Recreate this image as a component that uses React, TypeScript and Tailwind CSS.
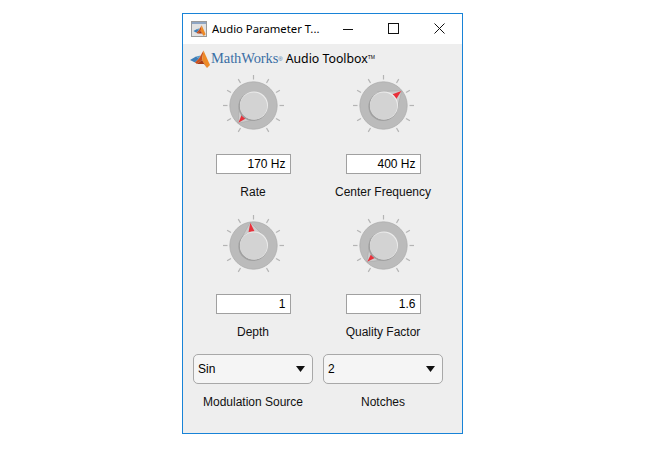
const ticks = [-150, -120, -90, -60, -30, 0, 30, 60, 90, 120, 150]

function Knob({ angle }: { angle: number }) {
  return (
    <svg width="71" height="71" viewBox="-35.5 -35.5 71 71" className="block">
      {ticks.map((t) => (
        <line key={t} x1="0" y1="-26" x2="0" y2="-30.5" stroke="#b4b4b4" strokeWidth="1.2" transform={`rotate(${t})`} />
      ))}
      <circle cx="0" cy="0" r="23.7" fill="#bbbbbb" stroke="#adadad" strokeWidth="0.8" />
      <g transform={`rotate(${angle})`}>
        <polygon points="0,-23.5 -14.3,-4.3 14.3,-4.3" fill="#cdcdcd" stroke="#a6a6a6" strokeWidth="0.5" />
        <polygon points="0,-23 -3,-14 3,-14" fill="#e8303a" />
      </g>
      <circle cx="-0.5" cy="1" r="14.6" fill="#a0a0a0" />
      <circle cx="0.5" cy="0" r="14" fill="#ececec" />
      <circle cx="0" cy="0.5" r="13.6" fill="#d3d3d3" />
    </svg>
  )
}

function Dial({ angle, value, label }: { angle: number; value: string; label: string }) {
  return (
    <div className="flex flex-col items-center h-[140px]">
      <Knob angle={angle} />
      <input
        readOnly
        value={value}
        className="mt-[13px] w-[75px] h-5 border border-[#a0a0a0] bg-white px-1 text-right text-xs text-black outline-none"
      />
      <span className="mt-[9px] h-[18px] leading-[18px] text-xs text-[#111]">{label}</span>
    </div>
  )
}

function Dropdown({ value, label }: { value: string; label: string }) {
  return (
    <div className="flex flex-col items-center">
      <div className="flex items-center justify-between w-[120px] h-[30px] rounded-[5px] border border-[#a8a8a8] bg-[#f5f5f5] pl-1 pr-[7px] text-xs text-black">
        <span>{value}</span>
        <svg width="9" height="6" viewBox="0 0 9 6">
          <polygon points="0,0 9,0 4.5,6" fill="#111" />
        </svg>
      </div>
      <span className="mt-[9px] h-[18px] leading-[18px] text-xs text-[#111]">{label}</span>
    </div>
  )
}

function Membrane({ width, height }: { width: number; height: number }) {
  return (
    <svg width={width} height={height} viewBox="0 0 20 18">
      <polygon points="0,10 6,6.5 9,8.5 5,12.5" fill="#3f7fb8" />
      <polygon points="6,6.5 9,8.5 10.5,5.5" fill="#5b9bc9" />
      <polygon points="9,8.5 13.5,0.5 12,10 7,14 5,12.5" fill="#c8501e" />
      <polygon points="13.5,0.5 20,15 17,18 12,10" fill="#ee8a26" />
      <polygon points="12,10 17,18 14,14 7,14" fill="#a83a12" />
    </svg>
  )
}

function WindowIcon() {
  return (
    <div className="flex flex-col w-4 h-4 border border-[#9a9a9a] bg-[#e2e2e2]">
      <div className="h-[2px] bg-[#8fa6c4]" />
      <div className="flex flex-1 items-center justify-center">
        <Membrane width={13} height={11} />
      </div>
    </div>
  )
}

export default function App() {
  return (
    <div className="w-[650px] h-[450px] bg-white pl-[182px] pt-[13px] font-['Liberation_Sans',Arial,sans-serif]">
      <div className="flex flex-col w-[281px] h-[421px] border border-[#1883d7] bg-[#eeeeee]">
        {/* title bar */}
        <div className="flex items-center h-[30px] bg-white pl-2">
          <WindowIcon />
          <span className="ml-[5px] w-[112px] text-[11.3px] text-black font-['Noto_Sans',sans-serif] whitespace-nowrap">
            Audio Parameter T...
          </span>
          <div className="flex items-center gap-[35px] pl-[19px] pb-[1px]">
            <svg width="10" height="10" viewBox="0 0 10 10">
              <line x1="0" y1="5.5" x2="10" y2="5.5" stroke="#111" />
            </svg>
            <svg width="11" height="11" viewBox="0 0 11 11">
              <rect x="0.5" y="0.5" width="10" height="10" fill="none" stroke="#111" />
            </svg>
            <svg width="11" height="11" viewBox="0 0 11 11">
              <path d="M0.5 0.5 L10.5 10.5 M10.5 0.5 L0.5 10.5" stroke="#111" fill="none" />
            </svg>
          </div>
        </div>

        {/* logo row */}
        <div className="flex items-center h-[26px] pl-[7px] pt-[4px]">
          <Membrane width={20} height={18} />
          <span className="ml-[1px] text-[14.5px] tracking-[-0.1px] text-[#3b6fa5] font-['Liberation_Serif',serif]">MathWorks</span>
          <span className="text-[6px] text-[#3b6fa5]">®</span>
          <span className="ml-[3px] text-[12.3px] text-black font-['Noto_Sans',sans-serif]">Audio Toolbox</span>
          <span className="self-start mt-[6px] text-[5px] text-black">TM</span>
        </div>

        {/* knobs */}
        <div className="grid grid-cols-[130px_130px] pl-[5px]">
          <Dial angle={-139} value="170 Hz" label="Rate" />
          <Dial angle={51} value="400 Hz" label="Center Frequency" />
          <Dial angle={-8} value="1" label="Depth" />
          <Dial angle={-135} value="1.6" label="Quality Factor" />
        </div>

        {/* dropdowns */}
        <div className="grid grid-cols-[130px_130px] pl-[5px] mt-[4px]">
          <Dropdown value="Sin" label="Modulation Source" />
          <Dropdown value="2" label="Notches" />
        </div>
      </div>
    </div>
  )
}
